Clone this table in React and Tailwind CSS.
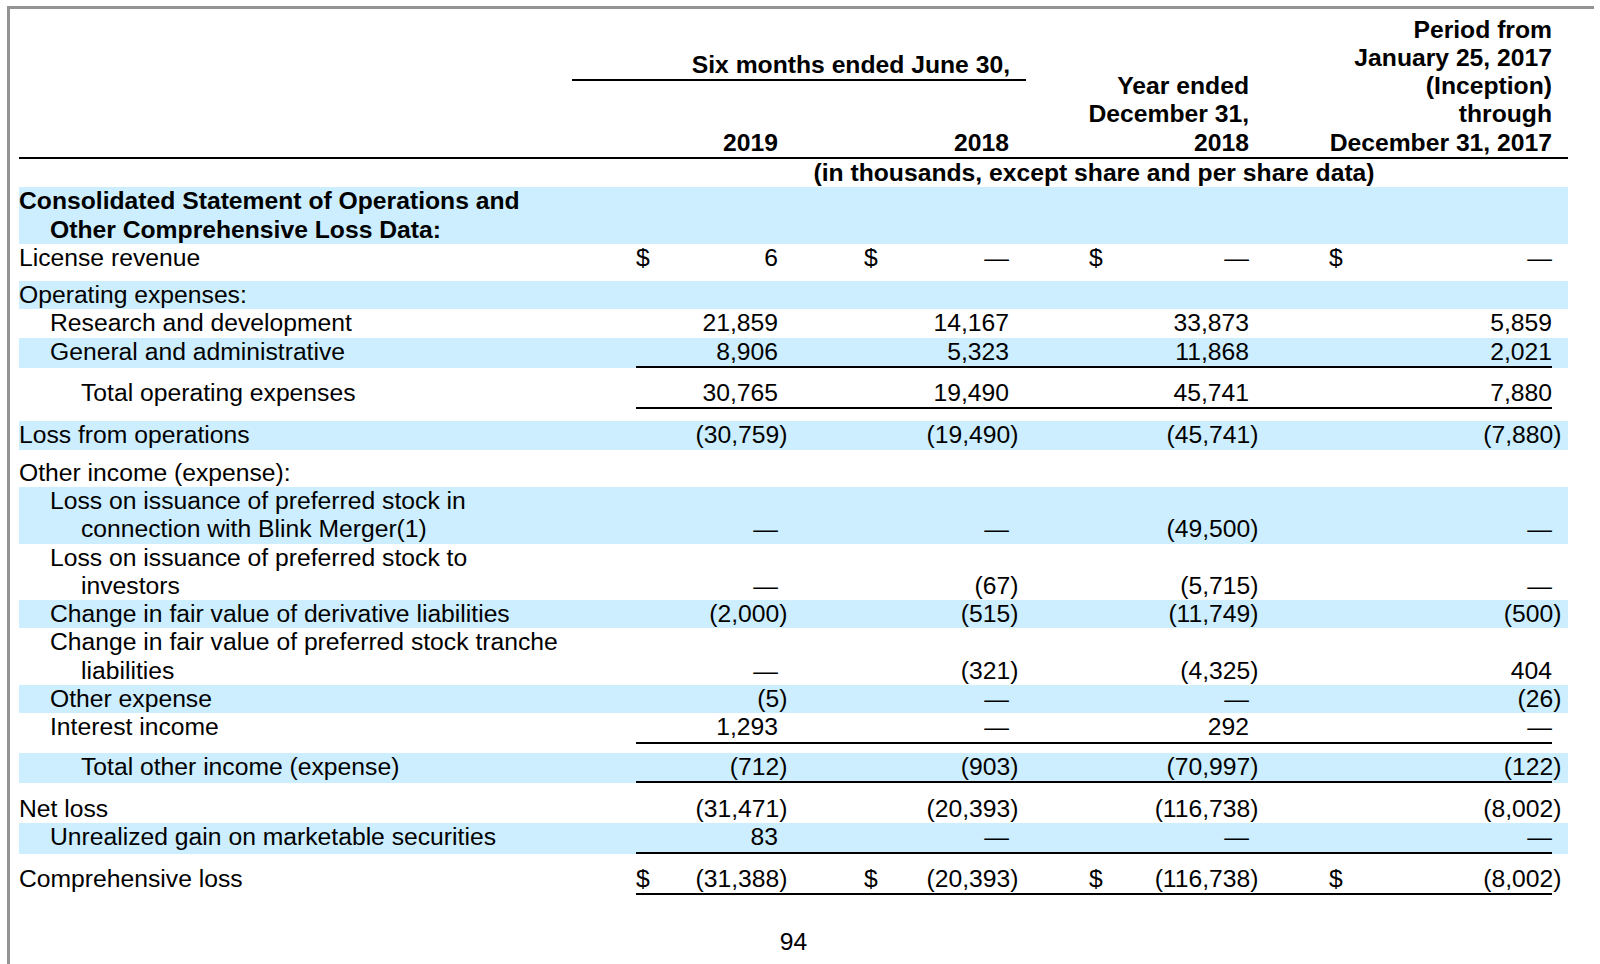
import React from "react";

const IND = ["", "pl-[31px]", "pl-[62px]"];

// label lines: [text, indent level]
const rows = [
  {
    lines: [["Consolidated Statement of Operations and", 0], ["Other Comprehensive Loss Data:", 1]],
    band: true,
    bold: true,
  },
  { lines: [["License revenue", 0]], vals: ["6", "—", "—", "—"], dollar: true },
  { lines: [["Operating expenses:", 0]], band: true, mt: "mt-[9px]" },
  { lines: [["Research and development", 1]], vals: ["21,859", "14,167", "33,873", "5,859"] },
  { lines: [["General and administrative", 1]], vals: ["8,906", "5,323", "11,868", "2,021"], band: true, line: true },
  { lines: [["Total operating expenses", 2]], vals: ["30,765", "19,490", "45,741", "7,880"], line: true, mt: "mt-[11px]" },
  { lines: [["Loss from operations", 0]], vals: ["(30,759)", "(19,490)", "(45,741)", "(7,880)"], band: true, mt: "mt-[12px]" },
  { lines: [["Other income (expense):", 0]], mt: "mt-[9px]" },
  {
    lines: [["Loss on issuance of preferred stock in", 1], ["connection with Blink Merger(1)", 2]],
    vals: ["—", "—", "(49,500)", "—"],
    band: true,
  },
  {
    lines: [["Loss on issuance of preferred stock to", 1], ["investors", 2]],
    vals: ["—", "(67)", "(5,715)", "—"],
  },
  { lines: [["Change in fair value of derivative liabilities", 1]], vals: ["(2,000)", "(515)", "(11,749)", "(500)"], band: true },
  {
    lines: [["Change in fair value of preferred stock tranche", 1], ["liabilities", 2]],
    vals: ["—", "(321)", "(4,325)", "404"],
  },
  { lines: [["Other expense", 1]], vals: ["(5)", "—", "—", "(26)"], band: true },
  { lines: [["Interest income", 1]], vals: ["1,293", "—", "292", "—"], line: true },
  { lines: [["Total other income (expense)", 2]], vals: ["(712)", "(903)", "(70,997)", "(122)"], band: true, line: true, mt: "mt-[9px]" },
  { lines: [["Net loss", 0]], vals: ["(31,471)", "(20,393)", "(116,738)", "(8,002)"], mt: "mt-[12px]" },
  { lines: [["Unrealized gain on marketable securities", 1]], vals: ["83", "—", "—", "—"], band: true, line: true },
  {
    lines: [["Comprehensive loss", 0]],
    vals: ["(31,388)", "(20,393)", "(116,738)", "(8,002)"],
    dollar: true,
    line: true,
    mt: "mt-[11px]",
  },
];

const COLS = [
  { w: "w-[142px]", pad: "" },
  { w: "w-[231px]", pad: "pl-[86px]" },
  { w: "w-[240px]", pad: "pl-[80px]" },
  { w: "w-[303px]", pad: "pl-[80px]" },
];

function Cell({ col, value, dollar }) {
  const neg = value.endsWith(")");
  return (
    <div className={`${col.w} flex shrink-0 items-end`}>
      {dollar && <span className={col.pad}>$</span>}
      <span className={`ml-auto ${neg ? "-mr-[9.5px]" : ""}`}>{value}</span>
    </div>
  );
}

function Row({ row }) {
  return (
    <div className={`flex ${row.mt || ""} ${row.band ? "bg-[#cceeff]" : ""} ${row.bold ? "font-bold" : ""}`}>
      <div className="w-[617px] shrink-0">
        {row.lines.map(([t, ind]) => (
          <div key={t} className={IND[ind]}>
            {t}
          </div>
        ))}
      </div>
      <div className={`flex w-[916px] shrink-0 items-end ${row.line ? "border-b-2 border-black" : ""}`}>
        {row.vals &&
          row.vals.map((v, i) => <Cell key={i} col={COLS[i]} value={v} dollar={row.dollar} />)}
      </div>
      <div className="w-[16px] shrink-0" />
    </div>
  );
}

export default function App() {
  return (
    <div className="min-h-screen bg-white pl-[7px] pt-[6px] font-['Liberation_Sans',Arial,sans-serif] text-[24.7px] leading-[28.3px] text-black">
      <div className="h-[958px] w-[1587px] border-l-[3px] border-t-[3px] border-[#949494] pl-[9px] pt-[6.5px]">
        <div className="w-[1549px]">
          {/* Column headers */}
          <div className="flex border-b-2 border-black font-bold">
            <div className="w-[617px] shrink-0" />
            <div className="flex w-[916px] shrink-0">
              <div className="flex w-[373px] shrink-0 flex-col">
                <div className="-ml-[64px] -mr-[17px] mt-[35px] border-b-2 border-black pr-[16px] text-right">
                  Six months ended June 30,
                </div>
                <div className="mt-auto flex">
                  <div className="w-[142px] text-right">2019</div>
                  <div className="w-[231px] text-right">2018</div>
                </div>
              </div>
              <div className="flex w-[240px] shrink-0 flex-col justify-end text-right">
                <div>Year ended</div>
                <div>December 31,</div>
                <div>2018</div>
              </div>
              <div className="flex w-[303px] shrink-0 flex-col justify-end text-right">
                <div>Period from</div>
                <div>January 25, 2017</div>
                <div>(Inception)</div>
                <div>through</div>
                <div>December 31, 2017</div>
              </div>
            </div>
            <div className="w-[16px] shrink-0" />
          </div>
          <div className="flex font-bold">
            <div className="w-[617px] shrink-0" />
            <div className="w-[916px] shrink-0 text-center">(in thousands, except share and per share data)</div>
          </div>

          {rows.map((r, i) => (
            <Row key={i} row={r} />
          ))}

          <div className="mt-[33px] text-center">94</div>
        </div>
      </div>
    </div>
  );
}
